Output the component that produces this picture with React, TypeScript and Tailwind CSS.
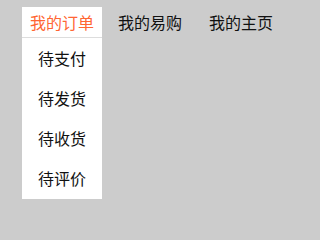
export default function App() {
  const subItems = ["待支付", "待发货", "待收货", "待评价"];

  return (
    <div className="w-full min-h-screen bg-[#cccccc] pt-[7px] pl-[22px] font-['Noto_Sans_CJK_SC',sans-serif] text-[16px]">
      <ul className="flex items-start">
        <li className="w-[80px] bg-white">
          <div className="h-[30px] leading-[30px] text-center text-[#ff6633] border-b border-[#dddddd] box-content">
            我的订单
          </div>
          <ul className="pb-px">
            {subItems.map((s) => (
              <li key={s} className="h-[40px] leading-[40px] text-center text-[#111111]">
                {s}
              </li>
            ))}
          </ul>
        </li>
        <li className="ml-[8px] px-[8px] h-[30px] leading-[30px] text-[#111111]">我的易购</li>
        <li className="ml-[11px] px-[8px] h-[30px] leading-[30px] text-[#111111]">我的主页</li>
      </ul>
    </div>
  );
}
